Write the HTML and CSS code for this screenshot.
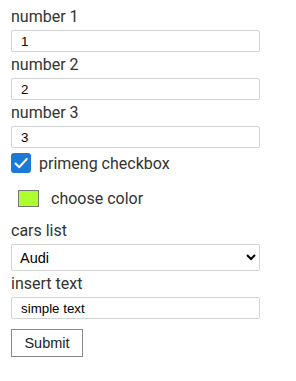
FILE: index.html
```html
<!DOCTYPE html>
<html>
<head>
<meta charset="utf-8">
<link rel="stylesheet" href="styles.css">
</head>
<body>
<form class="form">
  <label class="label">number 1</label>
  <input class="field" type="text" value="1">
  <label class="label">number 2</label>
  <input class="field" type="text" value="2">
  <label class="label">number 3</label>
  <input class="field" type="text" value="3">
  <div class="check-row">
    <span class="checkbox">
      <svg width="20" height="20" viewBox="0 0 20 20"><path d="M4.5 10.5 L8.3 14.2 L15.8 6" fill="none" stroke="#fff" stroke-width="2" stroke-linecap="round" stroke-linejoin="round"/></svg>
    </span>
    <span class="check-label">primeng checkbox</span>
  </div>
  <div class="color-row">
    <span class="swatch"></span>
    <span class="color-label">choose color</span>
  </div>
  <label class="label label-cars">cars list</label>
  <select class="select">
    <option>Audi</option>
  </select>
  <label class="label label-text">insert text</label>
  <input class="field" type="text" value="simple text">
  <button class="submit" type="button">Submit</button>
</form>
</body>
</html>
```
FILE: styles.css
```css
html, body {
  margin: 0;
  padding: 0;
  background: #fff;
}
body {
  padding: 4px 11px;
}
.form {
  display: flex;
  flex-direction: column;
  align-items: flex-start;
  width: 249px;
}
.label {
  font-family: Roboto, "Noto Sans", sans-serif;
  font-size: 16px;
  line-height: 26px;
  color: #333;
}
.field {
  box-sizing: border-box;
  width: 249px;
  height: 22px;
  margin: 0;
  padding: 0 9px;
  border: 1px solid #d4d4d4;
  border-radius: 2px;
  font-family: "Liberation Sans", Arial, sans-serif;
  font-size: 13.33px;
  color: #000;
  outline: none;
}
.check-row {
  display: flex;
  align-items: center;
  gap: 8px;
  margin-top: 5px;
  height: 20px;
}
.checkbox {
  display: block;
  width: 20px;
  height: 20px;
  border-radius: 3px;
  background: #1b7ad6;
}
.checkbox svg { display: block; }
.check-label {
  font-family: Roboto, "Noto Sans", sans-serif;
  font-size: 16px;
  color: #333;
}
.color-row {
  display: flex;
  align-items: center;
  gap: 12px;
  margin-top: 16px;
  padding-left: 7px;
}
.swatch {
  box-sizing: border-box;
  width: 21px;
  height: 17px;
  border: 1px solid #767676;
  background: #adff2f;
}
.color-label {
  font-family: Roboto, "Noto Sans", sans-serif;
  font-size: 16px;
  color: #333;
}
.label-cars {
  margin-top: 10px;
}
.select {
  box-sizing: border-box;
  width: 249px;
  height: 27px;
  margin: 0;
  padding: 0 4px;
  border: 1px solid #d4d4d4;
  border-radius: 2px;
  background: #fff;
  font-family: "Liberation Sans", Arial, sans-serif;
  font-size: 14.5px;
  color: #000;
}
.submit {
  margin-top: 10px;
  box-sizing: border-box;
  width: 72px;
  height: 28px;
  padding: 0;
  background: #fff;
  border: 1px solid #8a8a8a;
  border-radius: 0;
  font-family: "Liberation Sans", Arial, sans-serif;
  font-size: 14.5px;
  color: #222;
}
```
